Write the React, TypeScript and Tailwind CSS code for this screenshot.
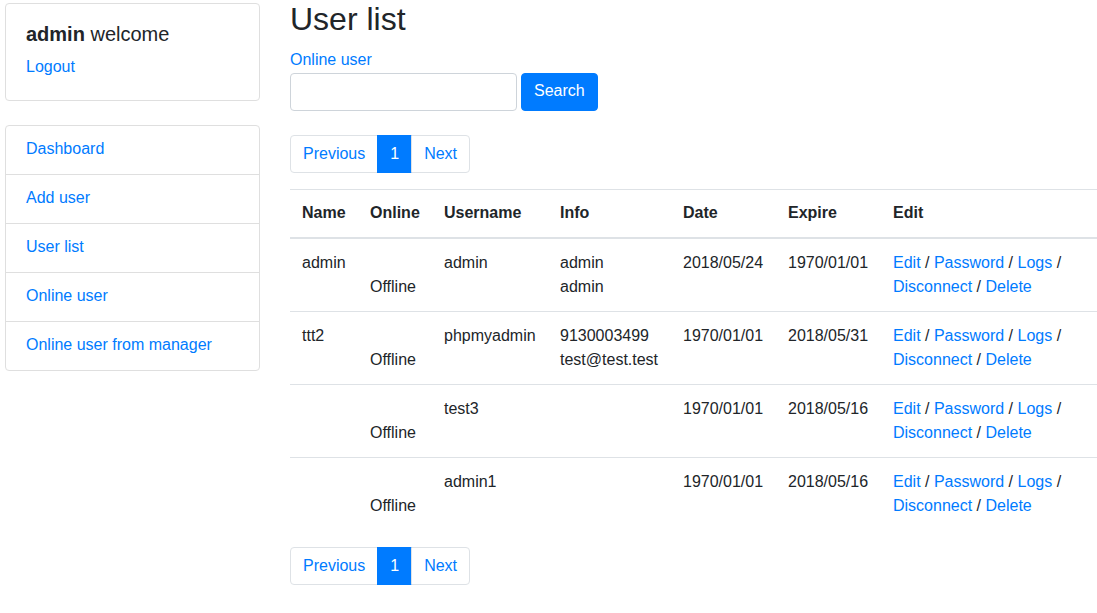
const users = [
  { name: "admin", username: "admin", info: ["admin", "admin"], date: "2018/05/24", expire: "1970/01/01" },
  { name: "ttt2", username: "phpmyadmin", info: ["9130003499", "test@test.test"], date: "1970/01/01", expire: "2018/05/31" },
  { name: "", username: "test3", info: [], date: "1970/01/01", expire: "2018/05/16" },
  { name: "", username: "admin1", info: [], date: "1970/01/01", expire: "2018/05/16" },
];

const menu = ["Dashboard", "Add user", "User list", "Online user", "Online user from manager"];

const Pagination = () => (
  <ul className="flex">
    <li>
      <a href="#" className="block px-3 py-2 leading-5 text-[#007bff] border border-[#dee2e6] rounded-l">
        Previous
      </a>
    </li>
    <li className="-ml-px">
      <a href="#" className="block px-3 py-2 leading-5 text-white bg-[#007bff] border border-[#007bff]">
        1
      </a>
    </li>
    <li className="-ml-px">
      <a href="#" className="block px-3 py-2 leading-5 text-[#007bff] border border-[#dee2e6] rounded-r">
        Next
      </a>
    </li>
  </ul>
);

const Sep = () => <span className="text-[#212529]"> / </span>;

const App = () => {
  return (
    <div className="flex min-h-screen bg-white text-base leading-6 text-[#212529] font-['Liberation_Sans',Arial,sans-serif]">
      {/* Sidebar */}
      <aside className="ml-[5px] mt-[3px] w-[255px] shrink-0">
        <div className="border border-[#dfdfdf] rounded px-5 pt-[18px] pb-[21px]">
          <h5 className="text-xl leading-6 mb-[9px]">
            <b>admin</b> welcome
          </h5>
          <a href="#" className="text-[#007bff]">
            Logout
          </a>
        </div>

        <ul className="mt-6 border border-[#dfdfdf] rounded">
          {menu.map((item, i) => (
            <li
              key={item}
              className={i > 0 ? "border-t border-[#dfdfdf] px-5 pt-[11px] pb-[13px]" : "px-5 pt-[11px] pb-[13px]"}
            >
              <a href="#" className="text-[#007bff]">
                {item}
              </a>
            </li>
          ))}
        </ul>
      </aside>

      {/* Main */}
      <main className="ml-[30px] flex-1">
        <h2 className="text-[32px] leading-[38px] mb-[10px]">User list</h2>
        <a href="#" className="text-[#007bff]">
          Online user
        </a>
        <form className="flex gap-1 mt-px" onSubmit={(e) => e.preventDefault()}>
          <input type="text" className="w-[227px] h-[38px] border border-[#ced4da] rounded px-3" />
          <button type="submit" className="h-[38px] px-3 pb-[2px] bg-[#007bff] text-white rounded border border-[#007bff]">
            Search
          </button>
        </form>

        <div className="mt-6">
          <Pagination />
        </div>

        <table className="w-full mt-4 border-collapse text-left">
          <thead>
            <tr>
              <th className="w-[68px] px-3 pt-[11px] pb-3 border-t border-b-2 border-[#dee2e6] align-bottom">Name</th>
              <th className="w-[74px] px-3 pt-[11px] pb-3 border-t border-b-2 border-[#dee2e6] align-bottom">Online</th>
              <th className="w-[116px] px-3 pt-[11px] pb-3 border-t border-b-2 border-[#dee2e6] align-bottom">Username</th>
              <th className="w-[123px] px-3 pt-[11px] pb-3 border-t border-b-2 border-[#dee2e6] align-bottom">Info</th>
              <th className="w-[105px] px-3 pt-[11px] pb-3 border-t border-b-2 border-[#dee2e6] align-bottom">Date</th>
              <th className="w-[105px] px-3 pt-[11px] pb-3 border-t border-b-2 border-[#dee2e6] align-bottom">Expire</th>
              <th className="px-3 pt-[11px] pb-3 border-t border-b-2 border-[#dee2e6] align-bottom">Edit</th>
            </tr>
          </thead>
          <tbody>
            {users.map((u) => (
              <tr key={u.username} className="h-[73px]">
                <td className="p-3 border-t border-[#dee2e6] align-top">{u.name}</td>
                <td className="p-3 border-t border-[#dee2e6] align-top">
                  <br />
                  Offline
                </td>
                <td className="p-3 border-t border-[#dee2e6] align-top">{u.username}</td>
                <td className="p-3 border-t border-[#dee2e6] align-top">
                  {u.info.map((line) => (
                    <div key={line}>{line}</div>
                  ))}
                </td>
                <td className="p-3 border-t border-[#dee2e6] align-top">{u.date}</td>
                <td className="p-3 border-t border-[#dee2e6] align-top">{u.expire}</td>
                <td className="p-3 border-t border-[#dee2e6] align-top text-[#007bff]">
                  <a href="#">Edit</a>
                  <Sep />
                  <a href="#">Password</a>
                  <Sep />
                  <a href="#">Logs</a>
                  <Sep />
                  <br />
                  <a href="#">Disconnect</a>
                  <Sep />
                  <a href="#">Delete</a>
                </td>
              </tr>
            ))}
          </tbody>
        </table>

        <div className="mt-4">
          <Pagination />
        </div>
      </main>
    </div>
  );
};

export default App;
